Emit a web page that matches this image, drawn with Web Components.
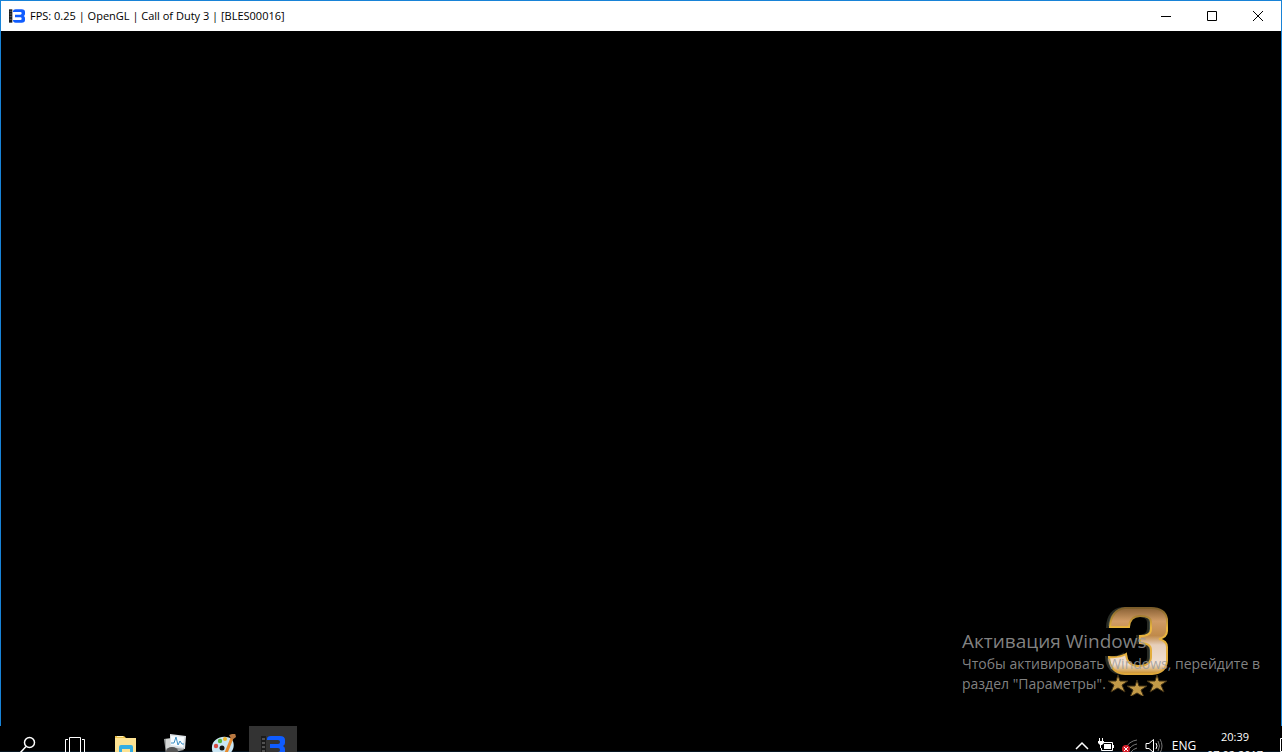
<!DOCTYPE html>
<html lang="ru">
<head>
<meta charset="utf-8">
<title>FPS: 0.25 | OpenGL | Call of Duty 3 | [BLES00016]</title>
<style>
html, body { height: 100%; margin: 0; background: #000; overflow: hidden; }
body { font-family: "Open Sans", "Noto Sans", sans-serif; }
</style>
</head>
<body>
<desktop-screen>
  <app-window caption="FPS: 0.25 | OpenGL | Call of Duty 3 | [BLES00016]">
    <game-emblem></game-emblem>
    <activation-notice>
      <span slot="title">Активация Windows</span>
      Чтобы активировать Windows, перейдите в раздел "Параметры".
    </activation-notice>
  </app-window>
  <task-bar slot="bar">
    <task-button label="Поиск">
      <svg width="24" height="24" fill="none" stroke="#fff" stroke-width="1.5"><circle cx="13.500" cy="8.500" r="5"/><path d="M10 12.500L4 19"/></svg>
    </task-button>
    <task-button label="Представление задач">
      <svg width="24" height="24" fill="none" stroke="#fff"><path d="M4.500 3.500h11v17h-11zM3 5.500H.5v13H3M17 5.500h2.500v13H17"/></svg>
    </task-button>
    <task-button label="Проводник">
      <svg width="24" height="24"><path d="M1 2h9l2 2h10v17H1z" fill="#e9c04d"/><path d="M3 2h6v1H3z" fill="#fff1b8"/><path d="M1 4h21v17H1z" fill="#fde393"/><path d="M5 20v-7q0-2 2-2h10q2 0 2 2v7h-3v-5H8v5z" fill="#35aee3"/></svg>
    </task-button>
    <task-button label="Монитор">
      <svg width="24" height="24"><path d="M1 5l12-2 8 13-18 4z" fill="#9fa2a2"/><path d="M3 5h5v12H3z" fill="#d4d6d5"/><path d="M7 0l16 2-1 13-15-2z" fill="#dce1e5"/><path d="M8 2l13 1-1 10-12-2z" fill="#f7fcff"/><path d="M8 9h3l2-6 2 8 2-4 2 3h2" fill="none" stroke="#3d8fc4"/><ellipse cx="9" cy="17" rx="6" ry="4" fill="#555"/></svg>
    </task-button>
    <task-button label="Paint">
      <svg width="26" height="24"><path d="M1 15C0 7 8 2 15 3c7 0 9 7 7 12-2 6-9 8-14 6-4 0-7-2-7-6" fill="#c9e6f4"/><circle cx="5" cy="12" r="2.200" fill="#d84b43"/><circle cx="9" cy="7" r="2.200" fill="#55b53c"/><circle cx="14" cy="5" r="2" fill="#f0b72c"/><circle cx="11" cy="14" r="2.500" fill="#111"/><path d="M15 19l6-15" stroke="#e88b2f" stroke-width="3"/><path d="M18 1l6-2 1 4-4 3z" fill="#b87841"/></svg>
    </task-button>
    <task-button label="RPCS3" active><emu-logo big></emu-logo></task-button>
  </task-bar>
</desktop-screen>

<script>
const define = (name, html, setup) => customElements.define(name, class extends HTMLElement {
  constructor() {
    super();
    const t = document.createElement("template");
    t.innerHTML = html;
    this.attachShadow({ mode: "open" }).append(t.content.cloneNode(true));
  }
  connectedCallback() { if (setup) setup(this, this.shadowRoot); }
});

define("desktop-screen", `
<style>
:host { display: flex; flex-direction: column; height: 100vh; background: #000; }
.main { flex: 1; min-height: 0; display: flex; }
.foot { flex: none; height: 26px; overflow: hidden; }
</style>
<div class="main"><slot></slot></div>
<div class="foot"><slot name="bar"></slot></div>`);

define("app-window", `
<style>
:host { flex: 1; display: flex; flex-direction: column; box-sizing: border-box; border: 1px solid #1883d7; border-bottom: 0; background: #000; }
header { height: 30px; flex: none; display: flex; align-items: center; background: #fff; color: #000; }
emu-logo { margin-left: 8px; }
h1 { flex: 1; margin: 0 0 0 5px; font-size: 11px; font-weight: 400; line-height: 16px; white-space: nowrap; }
button { width: 46px; height: 30px; padding: 0; border: 0; background: none; display: grid; place-items: center; }
svg { display: block; }
main { flex: 1; position: relative; }
</style>
<header>
  <emu-logo></emu-logo><h1></h1>
  <button aria-label="Свернуть"><svg width="10" height="10"><path d="M0 5.500h10" stroke="#000"/></svg></button>
  <button aria-label="Развернуть"><svg width="10" height="10"><path d="M.5.500h9v9h-9z" fill="none" stroke="#000"/></svg></button>
  <button aria-label="Закрыть"><svg width="10" height="10"><path d="M0 0l10 10M10 0L0 10" stroke="#000"/></svg></button>
</header>
<main><slot></slot></main>`, (el, root) => {
  root.querySelector("h1").textContent = el.getAttribute("caption");
});

define("emu-logo", `
<style>
:host { display: block; width: 16px; height: 16px; }
:host([big]) { width: 24px; height: 24px; }
svg { display: block; width: 100%; height: 100%; }
</style>
<svg viewBox="0 0 24 24">
  <path d="M0 2h5v20H0z" fill="#1b1b1b"/>
  <path d="M1 5h3M1 9h3M1 13h3M1 17h3" stroke="#888"/>
  <path d="M6 5q0-3 4-3h9q5 0 5 4v3q0 2-2 3 2 1 2 3v3q0 4-5 4h-9q-4 0-4-4h11q2 0 2-2t-2-2H9v-4h8q2 0 2-2t-2-2H6z" fill="#0f5cff"/>
</svg>`);

define("game-emblem", `
<style>
:host { position: absolute; right: 110px; bottom: 30px; width: 66px; height: 92px; }
svg { display: block; }
</style>
<svg width="66" height="92" viewBox="0 0 66 92" role="img" aria-label="Call of Duty 3">
  <defs>
    <linearGradient id="face" x2="0" y2="1"><stop offset="0" stop-color="#8a6236"/><stop offset=".2" stop-color="#d19c66"/><stop offset=".42" stop-color="#c08a4a"/><stop offset=".56" stop-color="#e6cfba"/><stop offset=".85" stop-color="#f1e0d2"/><stop offset="1" stop-color="#c98d28"/></linearGradient>
    <linearGradient id="rim" x2="0" y2="1"><stop offset="0" stop-color="#7a5c2a"/><stop offset=".3" stop-color="#eab63f"/><stop offset="1" stop-color="#dda63a"/></linearGradient>
    <path id="three" d="M5 23Q6 6 20 4h26q14 0 16 11v12q0 6-8 8 8 2 8 8v14q-1 12-15 13H20Q5 69 4 53q10 1 17-3 1 12 12 12 13 0 13-9v-7q0-7-11-7v-7q11 0 11-7v-7q0-6-11-6-10 0-11 11z"/>
    <path id="star" d="M0-9l2 6h8l-6 4 3 7-7-4-7 4 3-7-6-4h8z"/>
  </defs>
  <use href="#three" x="-3" fill="#3d4741" stroke="#282b25" stroke-width="2"/>
  <use href="#three" fill="url(#face)" stroke="url(#rim)" stroke-width="2"/>
  <g fill="#c39a48" stroke="#3f3015">
    <use href="#star" x="13" y="80"/><use href="#star" x="32" y="85"/><use href="#star" x="52" y="80"/>
  </g>
</svg>`);

define("activation-notice", `
<style>
:host { position: absolute; right: 13px; bottom: 32px; width: 306px; color: rgba(155,155,155,.85); font-size: 14px; line-height: 20px; }
h2 { margin: 0; font-size: 19px; line-height: 26px; font-weight: 400; }
p { margin: 0; }
</style>
<h2><slot name="title"></slot></h2><p><slot></slot></p>`);

define("task-bar", `
<style>
:host { display: flex; height: 40px; background: linear-gradient(#061420, #061420) 0 25px / 100% 1px no-repeat #000; color: #fff; box-sizing: border-box; padding-left: 4px; }
nav { display: flex; flex: 1; gap: 1px; }
.tray { display: flex; align-items: center; font-size: 12px; line-height: 16px; }
button { border: 0; padding: 0; background: none; color: inherit; font: inherit; display: grid; place-items: center; width: 24px; height: 40px; }
.lang { width: 36px; }
.clock { width: 66px; font-size: 11px; line-height: 18px; white-space: nowrap; align-content: center; }
.more { width: 14px; justify-items: end; }
svg { display: block; fill: none; stroke: #fff; }
</style>
<nav><slot></slot></nav>
<div class="tray">
  <button aria-label="Скрытые значки"><svg width="16" height="16"><path d="M2 11l6-6 6 6" stroke-width="1.500"/></svg></button>
  <button aria-label="Батарея"><svg width="16" height="16"><path d="M5 4.500h9.500v8h-11V10M15.500 7v3"/><path d="M6 6h7v5H6z" fill="#fff" stroke="none"/><path d="M1.500 0v3M4.500 0v3M2.500 6v4"/><path d="M0 3h6v2L4 7H2L0 5z" fill="#fff" stroke="none"/></svg></button>
  <button aria-label="Нет сети"><svg width="18" height="18"><path d="M4 12Q8 4 16 3M7 14q3-6 9-7M10 15q2-3 6-4" stroke="#777"/><circle cx="5" cy="12" r="4" fill="#d71f2b" stroke="none"/><path d="M3 10l4 4M7 10l-4 4"/></svg></button>
  <button aria-label="Громкость"><svg width="18" height="16"><path d="M1 5.500h3L8.500 1.500v13L4 10.500H1z"/><path d="M11 5q2 3 0 6"/><path d="M13 3q3 5 0 10M15 1q4 7 0 14" stroke="#777"/></svg></button>
  <button class="lang">ENG</button>
  <button class="clock"><time>20:39</time><time>07.02.2017</time></button>
  <button class="more" aria-label="Уведомления"><svg width="2" height="16"><path d="M2 .5H.5v13H2"/></svg></button>
</div>`);

define("task-button", `
<style>
:host { display: block; }
button { width: 48px; height: 40px; border: 0; padding: 0; background: none; display: grid; place-items: center; }
:host([active]) button { background: #333; }
</style>
<button><slot></slot></button>`, (el, root) => {
  root.querySelector("button").setAttribute("aria-label", el.getAttribute("label"));
});
</script>
</body>
</html>
